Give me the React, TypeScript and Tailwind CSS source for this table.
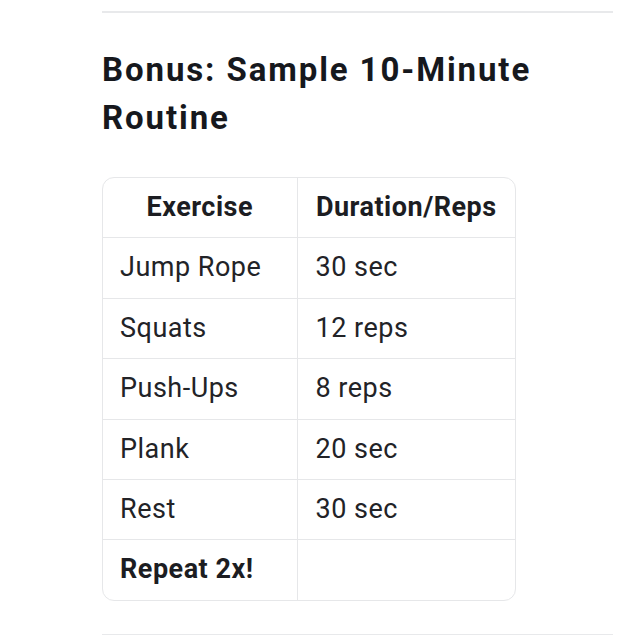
const rows: [string, string][] = [
  ["Jump Rope", "30 sec"],
  ["Squats", "12 reps"],
  ["Push-Ups", "8 reps"],
  ["Plank", "20 sec"],
  ["Rest", "30 sec"],
];

export default function App() {
  return (
    <div className="min-h-[635px] bg-white font-['Roboto',sans-serif] text-[#1c1d22]">
      <div className="ml-[102px] w-[511px] pt-[11px]">
        <hr className="border-t-2 border-[#e8e9eb]" />

        <h2 className="mt-[33px] text-[33px] font-bold leading-[48px] tracking-[1.9px] text-[#16181d]">
          Bonus: Sample 10-Minute Routine
        </h2>

        {/* routine table — rounded outer border, grid lines between cells */}
        <div className="mt-[35px] w-[414px] overflow-hidden rounded-[12px] border border-[#e6e7e9]">
          <table className="w-full border-collapse text-[27px] leading-[33.4px] tracking-[0.5px]">
            <thead>
              <tr>
                <th className="w-[194px] border-r border-b border-[#e6e7e9] py-[13px] text-center font-bold">
                  Exercise
                </th>
                <th className="border-b border-[#e6e7e9] py-[13px] text-center font-bold">
                  Duration/Reps
                </th>
              </tr>
            </thead>
            <tbody>
              {rows.map(([ex, dur]) => (
                <tr key={ex}>
                  <td className="border-r border-b border-[#e6e7e9] px-[17px] py-[13px] text-[#222327]">
                    {ex}
                  </td>
                  <td className="border-b border-[#e6e7e9] px-[18px] py-[13px] text-[#222327]">
                    {dur}
                  </td>
                </tr>
              ))}
              <tr>
                <td className="border-r border-[#e6e7e9] px-[17px] py-[13px] font-bold">
                  Repeat 2x!
                </td>
                <td className="py-[13px]" />
              </tr>
            </tbody>
          </table>
        </div>

        <hr className="mt-[33px] border-t-2 border-[#e8e9eb]" />
      </div>
    </div>
  );
}
